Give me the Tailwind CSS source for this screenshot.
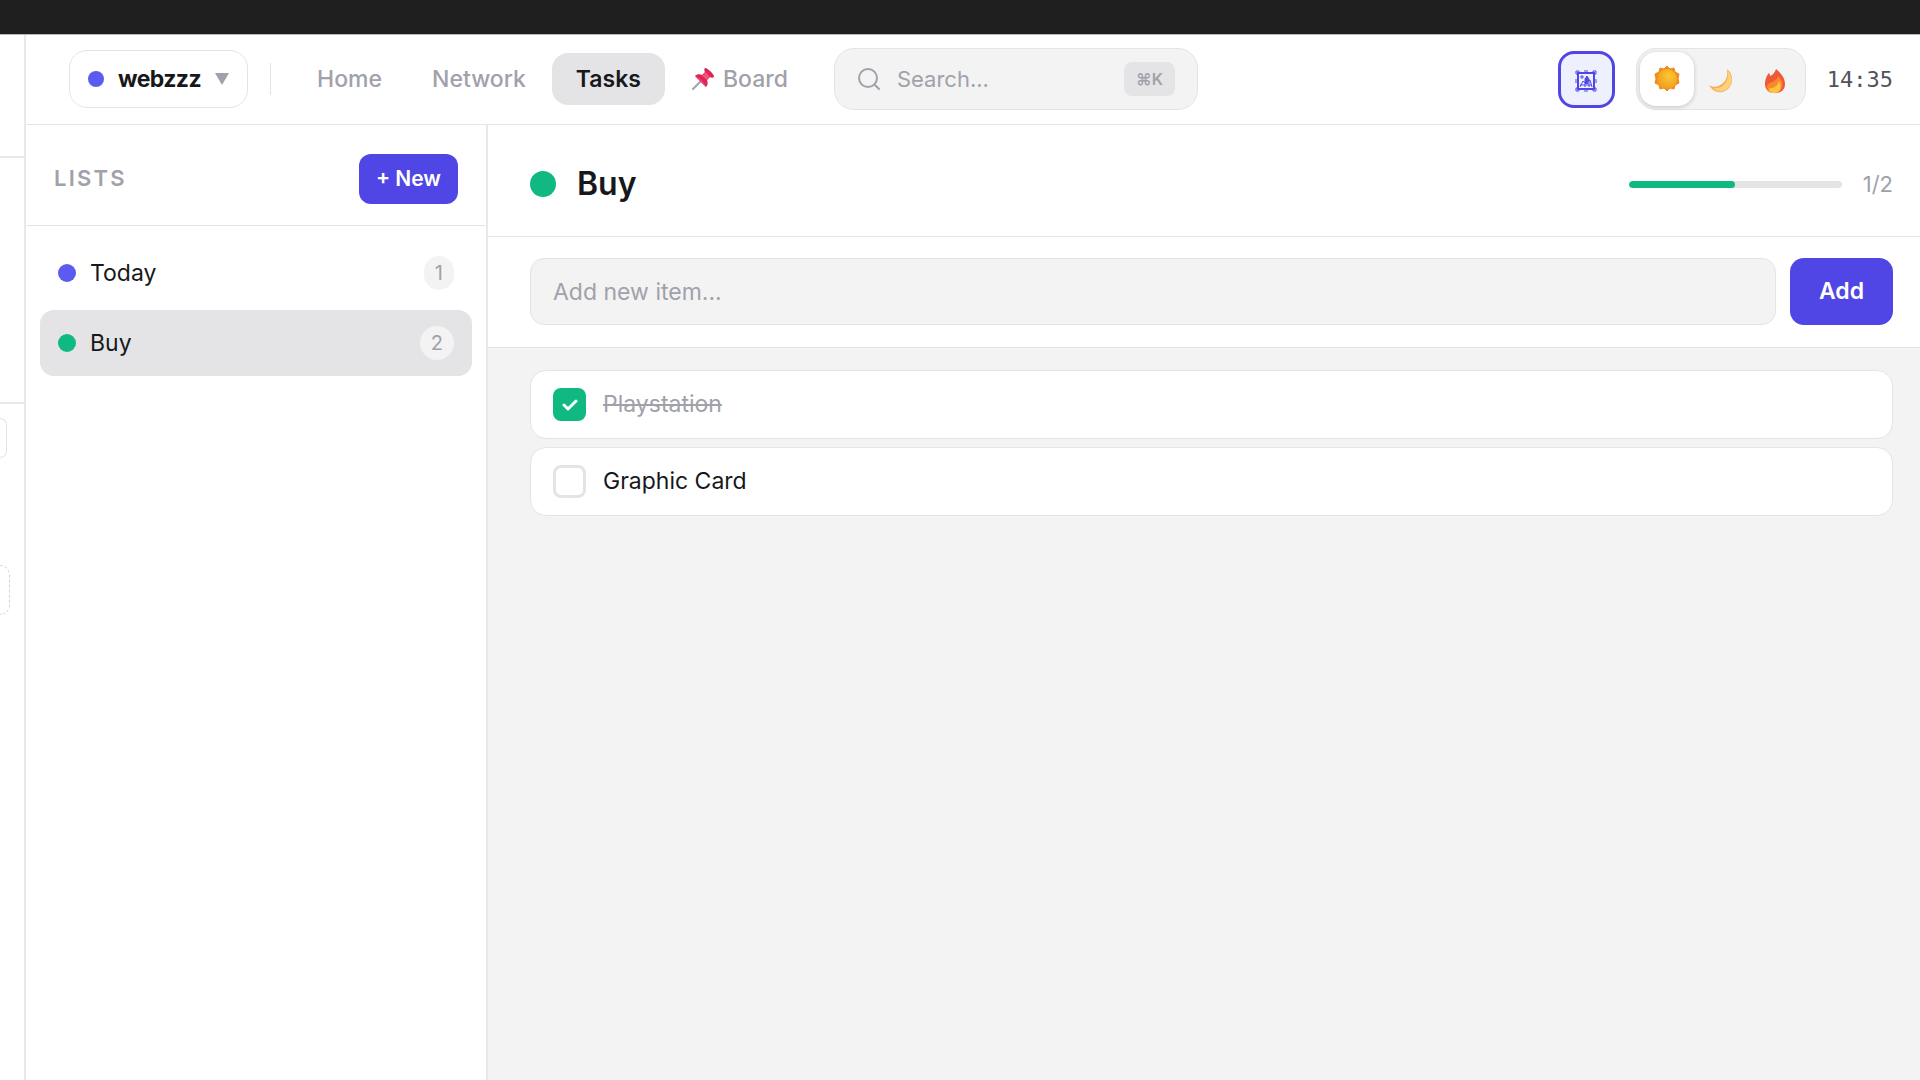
<!DOCTYPE html>
<html lang="en">
  <head>
    <meta charset="UTF-8" />
    <meta name="viewport" content="width=device-width, initial-scale=1.0" />
    <title>Tasks - webzzz</title>
    <script src="https://cdn.jsdelivr.net/npm/@tailwindcss/browser@4"></script>
  </head>
  <body class="flex min-h-screen flex-col bg-white font-['Inter',sans-serif] text-[23px] text-[#18181b]">
    <div class="h-[34px] shrink-0 bg-[#1f1f1f]"></div>

    <div class="flex flex-1 border-t border-[#b8b8b8]">
      <!-- Collapsed panel -->
      <aside class="w-[26px] shrink-0 overflow-hidden border-r-2 border-[#e8e8ea]">
        <div class="h-[123px] border-b-2 border-[#e8e8ea]"></div>
        <div class="h-[246px] border-b-2 border-[#e8e8ea]"></div>
        <div class="mt-[14px] h-[40px] w-[7px] rounded-r-lg border-y border-r border-[#e4e4e7]"></div>
        <div class="mt-[107px] h-[50px] w-[10px] rounded-r-xl border-y border-r border-dashed border-[#d4d4d8]"></div>
      </aside>

      <div class="flex min-w-0 flex-1 flex-col">
        <!-- Top bar -->
        <header class="flex h-[90px] shrink-0 items-center gap-[22px] border-b border-[#e4e4e7] pr-[27px] pb-px pl-[43px] font-medium">
          <button class="flex h-[58px] items-center gap-[14px] rounded-[18px] border border-[#e4e4e7] px-[18px] font-bold tracking-tight">
            <span class="size-4 rounded-full bg-[#5b5bf0]"></span>
            webzzz
            <svg class="w-[14px]" viewBox="0 0 14 12" fill="#a1a1aa"><path d="M0 0h14L7 12z" /></svg>
          </button>
          <div class="h-8 w-px bg-[#e4e4e7]"></div>

          <nav class="flex h-[52px] gap-0.5 text-[#a1a1aa]">
            <button class="px-6">Home</button>
            <button class="px-6">Network</button>
            <button class="rounded-[16px] bg-[#e4e4e7] px-6 font-semibold text-[#18181b]">Tasks</button>
            <button class="flex items-center gap-2 px-6">
              <svg class="size-6" viewBox="0 0 24 24">
                <path d="M2 22 10 14" stroke="#9ca3af" stroke-width="2" stroke-linecap="round" />
                <path d="M14 1c2-1 10 7 9 9-1 1-3 1-4 0l-3 3c1 3 1 5-1 7L4 9c2-2 5-2 7-1l3-3c-1-1-1-3 0-4z" fill="#dc2457" />
                <path d="m11 9 4-4 4 5-3 3z" fill="#f0527a" />
                <path d="M4 9c2-1 11 7 11 11z" fill="#f43f6e" />
              </svg>
              Board
            </button>
          </nav>

          <label class="flex h-[62px] w-[364px] items-center gap-4 rounded-[20px] border border-[#e4e4e7] bg-[#f3f3f3] pr-[22px] pl-[22px]">
            <svg class="size-6 shrink-0" viewBox="0 0 24 24" fill="none" stroke="#a1a1aa" stroke-width="2" stroke-linecap="round">
              <circle cx="11" cy="11" r="9" />
              <path d="m18 18 4 4" />
            </svg>
            <input type="text" aria-label="Search" placeholder="Search..." class="min-w-0 flex-1 text-[22px] font-normal outline-none placeholder:text-[#a1a1aa]" />
            <kbd class="flex h-[34px] items-center rounded-lg bg-[#e4e4e7] px-3 font-['Inter','DejaVu_Sans',sans-serif] text-base font-semibold text-[#a1a1aa]">⌘K</kbd>
          </label>

          <div class="ml-auto flex items-center gap-[21px]">
            <button aria-label="Background" class="grid size-[57px] place-items-center rounded-[16px] border-[3px] border-[#4f46e5] bg-[#eef0fd]">
              <svg class="mt-1 size-[22px]" viewBox="0 0 22 22" fill="none" stroke="#4f46e5" stroke-width="2">
                <path d="M3 3h16v16H3z" />
                <path d="M1 1h3v3H1zM18 1h3v3h-3zM1 18h3v3H1zM18 18h3v3h-3zM9 1h4M9 21h4M1 9v4M21 9v4" stroke-width="1" />
                <path d="M6 6h2v2H6zM5 17l3-6 2 2M10 17V9l2-3 2 3v8M12 12l3-2 2 7M5 15h12" stroke-width="1" />
                <path d="m10 9 2-3 2 4-1 4h-3z" fill="#4f46e5" stroke="none" />
              </svg>
            </button>

            <div class="flex h-[62px] items-center rounded-[20px] border border-[#e4e4e7] bg-[#f3f3f3] p-[3px]">
              <button aria-label="Light theme" class="grid size-[54px] place-items-center rounded-[16px] bg-white shadow-[0_1px_4px_rgba(0,0,0,0.2)]">
                <svg class="size-[26px]" viewBox="0 0 26 26">
                  <defs>
                    <radialGradient id="sun" cx=".6" cy=".35" r=".6"><stop offset="0" stop-color="#fbc92d" /><stop offset="1" stop-color="#f0a024" /></radialGradient>
                  </defs>
                  <path d="m13 0 3 3 4-1 1 4 4 2-1 5 1 4-4 2-1 4-4-1-3 3-3-3-4 1-1-4-4-2 1-4-1-5 4-2 1-4 4 1z" fill="#f28a1c" stroke="#f28a1c" stroke-linejoin="round" />
                  <circle cx="13" cy="13" r="10" fill="url(#sun)" />
                </svg>
              </button>
              <button aria-label="Dark theme" class="grid size-[54px] place-items-center">
                <svg class="mt-1 size-6" viewBox="0 0 24 24">
                  <path d="M18 0c6 5 7 13 2 19C15 25 5 25 0 16c4 3 10 2 14-2 4-3 5-9 4-14z" fill="#f5ad55" />
                  <path d="M19 2c5 6 5 12 1 16-4 5-11 6-16 1 5 1 10-1 13-6 2-3 2-7 2-11z" fill="#fdd07c" />
                </svg>
              </button>
              <button aria-label="Warm theme" class="grid size-[54px] place-items-center">
                <svg class="mt-1 h-6 w-5" viewBox="0 0 20 24">
                  <path d="M11 0c5 4 9 9 9 15 0 5-3 9-10 9S0 20 0 15C0 11 1 7 4 4c1 1 1 2 1 3 3-1 5-4 6-7z" fill="#f0583a" />
                  <path d="M13 7c4 4 5 7 4 11-1 4-4 6-8 6-5 0-7-3-7-6 0-4 4-4 7-6 2-1 4-3 4-5z" fill="#f98a2b" />
                  <path d="M14 12c3 5 2 12-5 12-3 0-5-2-5-5 4 1 9-2 10-7z" fill="#fdc43f" />
                </svg>
              </button>
            </div>

            <time class="font-['DejaVu_Sans_Mono',monospace] text-[22px] text-[#52525b]">14:35</time>
          </div>
        </header>

        <div class="flex flex-1">
          <!-- Lists sidebar -->
          <section class="w-[462px] shrink-0 border-r-2 border-[#e8e8ea]">
            <div class="flex h-[101px] items-center justify-between border-b border-[#e4e4e7] px-7 pt-[7px]">
              <h2 class="text-[22px] font-semibold tracking-widest text-[#a1a1aa]">LISTS</h2>
              <button class="h-[50px] rounded-[12px] bg-[#4f46e5] px-[17px] text-[21px] font-semibold text-white">+ New</button>
            </div>
            <ul class="flex flex-col gap-1 p-[14px]">
              <li>
                <button class="flex h-[66px] w-full items-center gap-[14px] rounded-[14px] px-[18px]">
                  <span class="size-[18px] rounded-full bg-[#5b5bf0]"></span>
                  Today
                  <span class="ml-auto flex h-[34px] items-center rounded-full bg-[#f3f3f3] px-[11px] text-xl text-[#a1a1aa]">1</span>
                </button>
              </li>
              <li>
                <button class="flex h-[66px] w-full items-center gap-[14px] rounded-[14px] bg-[#e4e4e7] px-[18px]">
                  <span class="size-[18px] rounded-full bg-[#10b981]"></span>
                  Buy
                  <span class="ml-auto flex h-[34px] items-center rounded-full bg-[#f3f3f3] px-[11px] text-xl text-[#a1a1aa]">2</span>
                </button>
              </li>
            </ul>
          </section>

          <!-- Selected list -->
          <main class="flex min-w-0 flex-1 flex-col bg-[#f3f3f3]">
            <div class="flex h-[112px] items-center border-b border-[#e4e4e7] bg-white pt-[7px] pr-[27px] pl-[42px]">
              <span class="size-[26px] rounded-full bg-[#10b981]"></span>
              <h1 class="ml-[21px] text-[32px] font-semibold">Buy</h1>
              <div class="ml-auto h-[7px] w-[213px] overflow-hidden rounded-full bg-[#e4e4e7]">
                <div class="h-full rounded-full bg-[#10b981]" style="width: 50%"></div>
              </div>
              <span class="ml-[21px] text-[22px] text-[#a1a1aa]">1/2</span>
            </div>

            <form class="flex h-[111px] items-center gap-[14px] border-b border-[#e4e4e7] bg-white pr-[27px] pb-px pl-[42px]">
              <input type="text" aria-label="New item" placeholder="Add new item..." class="h-[67px] min-w-0 flex-1 rounded-[14px] border border-[#e4e4e7] bg-[#f3f3f3] px-[22px] outline-none placeholder:text-[#a1a1aa]" />
              <button type="button" class="h-[67px] rounded-[14px] bg-[#4f46e5] px-[29px] font-semibold text-white">Add</button>
            </form>

            <ul class="flex flex-col gap-2 py-[22px] pr-[27px] pl-[42px]">
              <li>
                <label class="flex h-[69px] items-center gap-[17px] rounded-[16px] border border-[#e4e4e7] bg-white px-[22px] text-[#a1a1aa] line-through">
                  <span class="grid">
                    <input type="checkbox" checked class="col-start-1 row-start-1 size-[33px] appearance-none rounded-lg bg-[#10b981]" />
                    <svg class="pointer-events-none col-start-1 row-start-1 size-4 place-self-center" viewBox="0 0 16 16" fill="none" stroke="#fff" stroke-width="3" stroke-linecap="round" stroke-linejoin="round"><path d="m2 8 4 4 8-8" /></svg>
                  </span>
                  Playstation
                </label>
              </li>
              <li>
                <label class="flex h-[69px] items-center gap-[17px] rounded-[16px] border border-[#e4e4e7] bg-white px-[22px]">
                  <input type="checkbox" class="size-[33px] appearance-none rounded-lg border-[3px] border-[#e4e4e7]" />
                  Graphic Card
                </label>
              </li>
            </ul>
          </main>
        </div>
      </div>
    </div>
  </body>
</html>
